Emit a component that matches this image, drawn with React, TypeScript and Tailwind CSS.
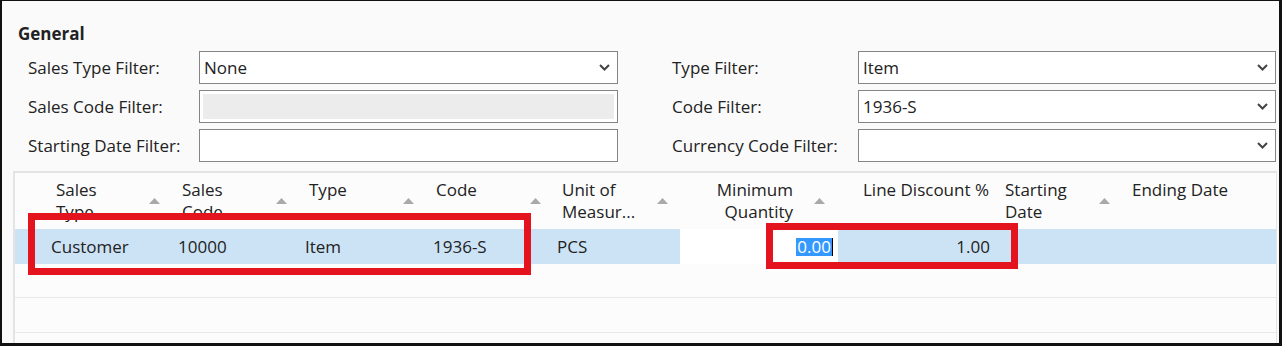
import React from "react";

const Chevron = () => (
  <svg width="11" height="7" viewBox="0 0 11 7">
    <path d="M1 1l4.5 4.5L10 1" fill="none" stroke="#444" strokeWidth="2" />
  </svg>
);

const SortArrow = () => (
  <svg width="11" height="6" viewBox="0 0 11 6" className="shrink-0">
    <path d="M0 6L5.5 0L11 6z" fill="#a9a9a9" />
  </svg>
);

function Field({ value, chevron, disabled, w }: { value?: string; chevron?: boolean; disabled?: boolean; w: string }) {
  return (
    <div className={`${w} h-[33px] border border-[#858585] bg-white flex items-center`}>
      {disabled ? (
        <div className="m-[3px] flex-1 self-stretch bg-[#ececec]" />
      ) : (
        <>
          <span className="flex-1 pl-[4px] leading-none">{value}</span>
          {chevron && (
            <span className="pr-[7px] flex items-center">
              <Chevron />
            </span>
          )}
        </>
      )}
    </div>
  );
}

function Row({ label, children, lw }: { label: string; children: React.ReactNode; lw: string }) {
  return (
    <div className="flex items-center h-[33px]">
      <div className={`${lw} shrink-0`}>{label}</div>
      {children}
    </div>
  );
}

export default function App() {
  return (
    <div className="relative w-[1282px] h-[346px] overflow-hidden border-t border-l-2 border-r-[3px] border-b-[3px] border-[#111] bg-[#fafafa] text-[17px] text-[#222] font-['Open_Sans',sans-serif]">
      <div className="pl-4 pt-[21px] font-bold leading-[23px]">General</div>
      <div className="mt-[6px] flex pl-[26px]">
        <div className="flex flex-col gap-[6px]">
          <Row label="Sales Type Filter:" lw="w-[171px]">
            <Field w="w-[419px]" value="None" chevron />
          </Row>
          <Row label="Sales Code Filter:" lw="w-[171px]">
            <Field w="w-[419px]" disabled />
          </Row>
          <Row label="Starting Date Filter:" lw="w-[171px]">
            <Field w="w-[419px]" />
          </Row>
        </div>
        <div className="ml-[54px] flex flex-col gap-[6px]">
          <Row label="Type Filter:" lw="w-[186px]">
            <Field w="w-[418px]" value="Item" chevron />
          </Row>
          <Row label="Code Filter:" lw="w-[186px]">
            <Field w="w-[418px]" value="1936-S" chevron />
          </Row>
          <Row label="Currency Code Filter:" lw="w-[186px]">
            <Field w="w-[418px]" chevron />
          </Row>
        </div>
      </div>

      <div className="mt-[9px] ml-[11px] mr-[2px] h-[200px] border-l-2 border-t-2 border-r border-[#e4e4e4] bg-[#fcfcfc]">
        {/* header */}
        <div className="flex h-[56px]">
          <div className="w-[155px] flex justify-between pl-[41px] pr-[10px]">
            <div className="pt-[6px] leading-[22px]">Sales<br />Type</div>
            <div className="self-center"><SortArrow /></div>
          </div>
          <div className="w-[127px] flex justify-between pl-[12px] pr-[10px]">
            <div className="pt-[6px] leading-[22px]">Sales<br />Code</div>
            <div className="self-center"><SortArrow /></div>
          </div>
          <div className="w-[127px] flex justify-between pl-[12px] pr-[10px]">
            <div className="pt-[6px] leading-[22px]">Type</div>
            <div className="self-center"><SortArrow /></div>
          </div>
          <div className="w-[127px] flex justify-between pl-[12px] pr-[10px]">
            <div className="pt-[6px] leading-[22px]">Code</div>
            <div className="self-center"><SortArrow /></div>
          </div>
          <div className="w-[129px] flex justify-between pl-[11px] pr-[12px]">
            <div className="pt-[6px] leading-[22px]">Unit of<br />Measur...</div>
            <div className="self-center"><SortArrow /></div>
          </div>
          <div className="w-[158px] flex justify-end gap-[21px] pr-[13px]">
            <div className="pt-[6px] leading-[22px] text-right">Minimum<br />Quantity</div>
            <div className="self-center"><SortArrow /></div>
          </div>
          <div className="w-[160px] flex justify-end pr-[9px]">
            <div className="pt-[6px] leading-[22px] text-right">Line Discount %</div>
          </div>
          <div className="w-[127px] flex justify-between pl-[7px] pr-[15px]">
            <div className="pt-[6px] leading-[22px]">Starting<br />Date</div>
            <div className="self-center"><SortArrow /></div>
          </div>
          <div className="flex-1 pl-[7px]">
            <div className="pt-[6px] leading-[22px]">Ending Date</div>
          </div>
        </div>
        {/* selected row */}
        <div className="flex h-[35px] items-stretch bg-[#cce3f6]">
          <div className="w-[155px] pl-[36px] flex items-center">Customer</div>
          <div className="w-[127px] pl-[8px] flex items-center">10000</div>
          <div className="w-[127px] pl-[8px] flex items-center">Item</div>
          <div className="w-[127px] pl-[9px] flex items-center">1936-S</div>
          <div className="w-[129px] pl-[6px] flex items-center">PCS</div>
          <div className="w-[158px] bg-white flex items-center justify-end pr-[5px]">
            <span className="bg-[#3399ff] text-white leading-[18px] px-[1px]">0.00</span>
            <span className="w-[1px] h-[18px] bg-black" />
          </div>
          <div className="w-[160px] flex items-center justify-end pr-[8px]">1.00</div>
          <div className="flex-1" />
        </div>
        <div className="h-[34px] border-b border-[#e8e8e8]" />
        <div className="h-[35px] border-b border-[#e8e8e8]" />
      </div>

      <div className="absolute left-[26px] top-[212px] w-[503px] h-[62px] border-[7px] border-[#e3141d]" />
      <div className="absolute left-[764px] top-[222px] w-[252px] h-[46px] border-[7px] border-[#e3141d]" />
    </div>
  );
}
